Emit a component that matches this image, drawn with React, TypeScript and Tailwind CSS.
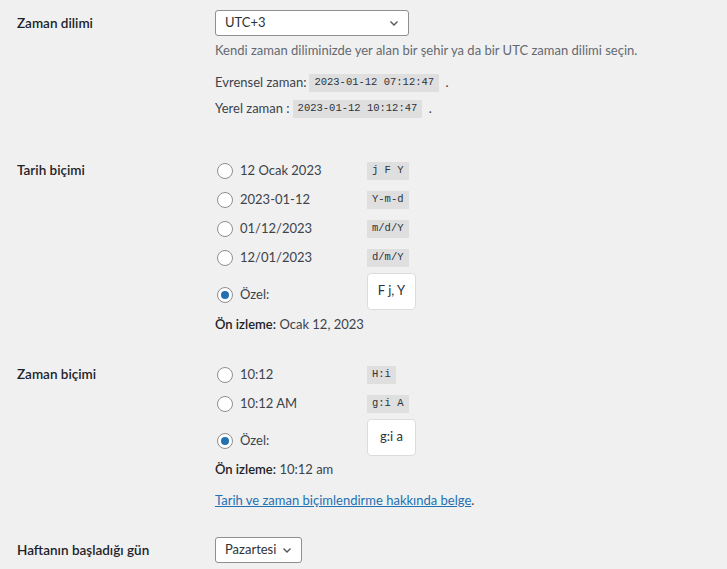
import { ReactNode } from "react";

const font = { fontFamily: 'Lato, "Noto Sans", sans-serif' };

function Code({ children }: { children: ReactNode }) {
  return (
    <code className="inline-flex h-[18px] items-center bg-[#dfdfe0] px-[5px] font-['Liberation_Mono',monospace] text-[10.5px] text-[#2c3338]">
      {children}
    </code>
  );
}

function Select({ value, width }: { value: string; width: string }) {
  return (
    <div
      className={`flex h-[26px] items-center justify-between rounded-[3px] border border-[#8c8f94] bg-white pl-[9px] pr-[8px] text-[13px] text-[#2c3338] ${width}`}
    >
      <span>{value}</span>
      <svg width="12" height="12" viewBox="0 0 12 12" fill="none">
        <path d="M2.5 4.5 6 8l3.5-3.5" stroke="#50575e" strokeWidth="1.4" />
      </svg>
    </div>
  );
}

function Radio({ checked }: { checked?: boolean }) {
  return (
    <span className="grid h-4 w-4 place-items-center rounded-full border border-[#8c8f94] bg-white">
      {checked && <span className="h-2 w-2 rounded-full bg-[#2271b1]" />}
    </span>
  );
}

function FormatRow({ label, code }: { label: string; code: string }) {
  return (
    <div className="flex h-[29px] items-center">
      <div className="flex w-[152px] items-center gap-[7px] pl-[2px]">
        <Radio />
        <span>{label}</span>
      </div>
      <Code>{code}</Code>
    </div>
  );
}

function CustomRow({ value }: { value: string }) {
  return (
    <div className="flex h-[38px] items-center">
      <div className="flex w-[152px] items-center gap-[7px] pl-[2px] pt-[8px]">
        <Radio checked />
        <span>Özel:</span>
      </div>
      <div className="grid h-[37px] w-[49px] place-items-center rounded-[4px] border border-[#dcdcde] bg-white text-[13px] text-[#2c3338]">
        {value}
      </div>
    </div>
  );
}

function Label({ children, className = "" }: { children: ReactNode; className?: string }) {
  return (
    <div className={`w-[215px] shrink-0 pl-[17px] text-[13.5px] font-semibold text-[#1d2327] ${className}`}>
      {children}
    </div>
  );
}

export default function App() {
  return (
    <div style={font} className="h-[569px] w-[727px] overflow-hidden bg-[#f0f0f1] text-[13px] text-[#3c434a]">
      {/* timezone */}
      <div className="flex">
        <Label className="mt-[10px] leading-[26px]">Zaman dilimi</Label>
        <div className="mt-[10px]">
          <Select value="UTC+3" width="w-[194px]" />
          <p className="mt-[5px] leading-[18px] text-[#646970]">
            Kendi zaman diliminizde yer alan bir şehir ya da bir UTC zaman dilimi seçin.
          </p>
          <p className="mt-[15px] flex h-[18px] items-center gap-[3px]">
            <span>Evrensel zaman:</span>
            <Code>2023-01-12 07:12:47</Code>
            <span>&nbsp;.</span>
          </p>
          <p className="mt-[8px] flex h-[18px] items-center gap-[3px]">
            <span>Yerel zaman :</span>
            <Code>2023-01-12 10:12:47</Code>
            <span>&nbsp;.</span>
          </p>
        </div>
      </div>

      {/* date format */}
      <div className="mt-[38px] flex">
        <Label className="leading-[29px]">Tarih biçimi</Label>
        <div>
          <FormatRow label="12 Ocak 2023" code="j F Y" />
          <FormatRow label="2023-01-12" code="Y-m-d" />
          <FormatRow label="01/12/2023" code="m/d/Y" />
          <FormatRow label="12/01/2023" code="d/m/Y" />
          <CustomRow value="F j, Y" />
          <p className="mt-[5px] leading-[18px]">
            <strong className="font-semibold text-[#1d2327]">Ön izleme:</strong> Ocak 12, 2023
          </p>
        </div>
      </div>

      {/* time format */}
      <div className="mt-[27px] flex">
        <Label className="leading-[29px]">Zaman biçimi</Label>
        <div>
          <FormatRow label="10:12" code="H:i" />
          <FormatRow label="10:12 AM" code="g:i A" />
          <CustomRow value="g:i a" />
          <p className="mt-[4px] leading-[18px]">
            <strong className="font-semibold text-[#1d2327]">Ön izleme:</strong> 10:12 am
          </p>
          <p className="mt-[13px] leading-[18px]">
            <a href="#" className="text-[#2271b1] underline">
              Tarih ve zaman biçimlendirme hakkında belge
            </a>
            .
          </p>
        </div>
      </div>

      {/* start of week */}
      <div className="mt-[28px] flex">
        <Label className="leading-[26px]">Haftanın başladığı gün</Label>
        <Select value="Pazartesi" width="w-[87px]" />
      </div>
    </div>
  );
}
